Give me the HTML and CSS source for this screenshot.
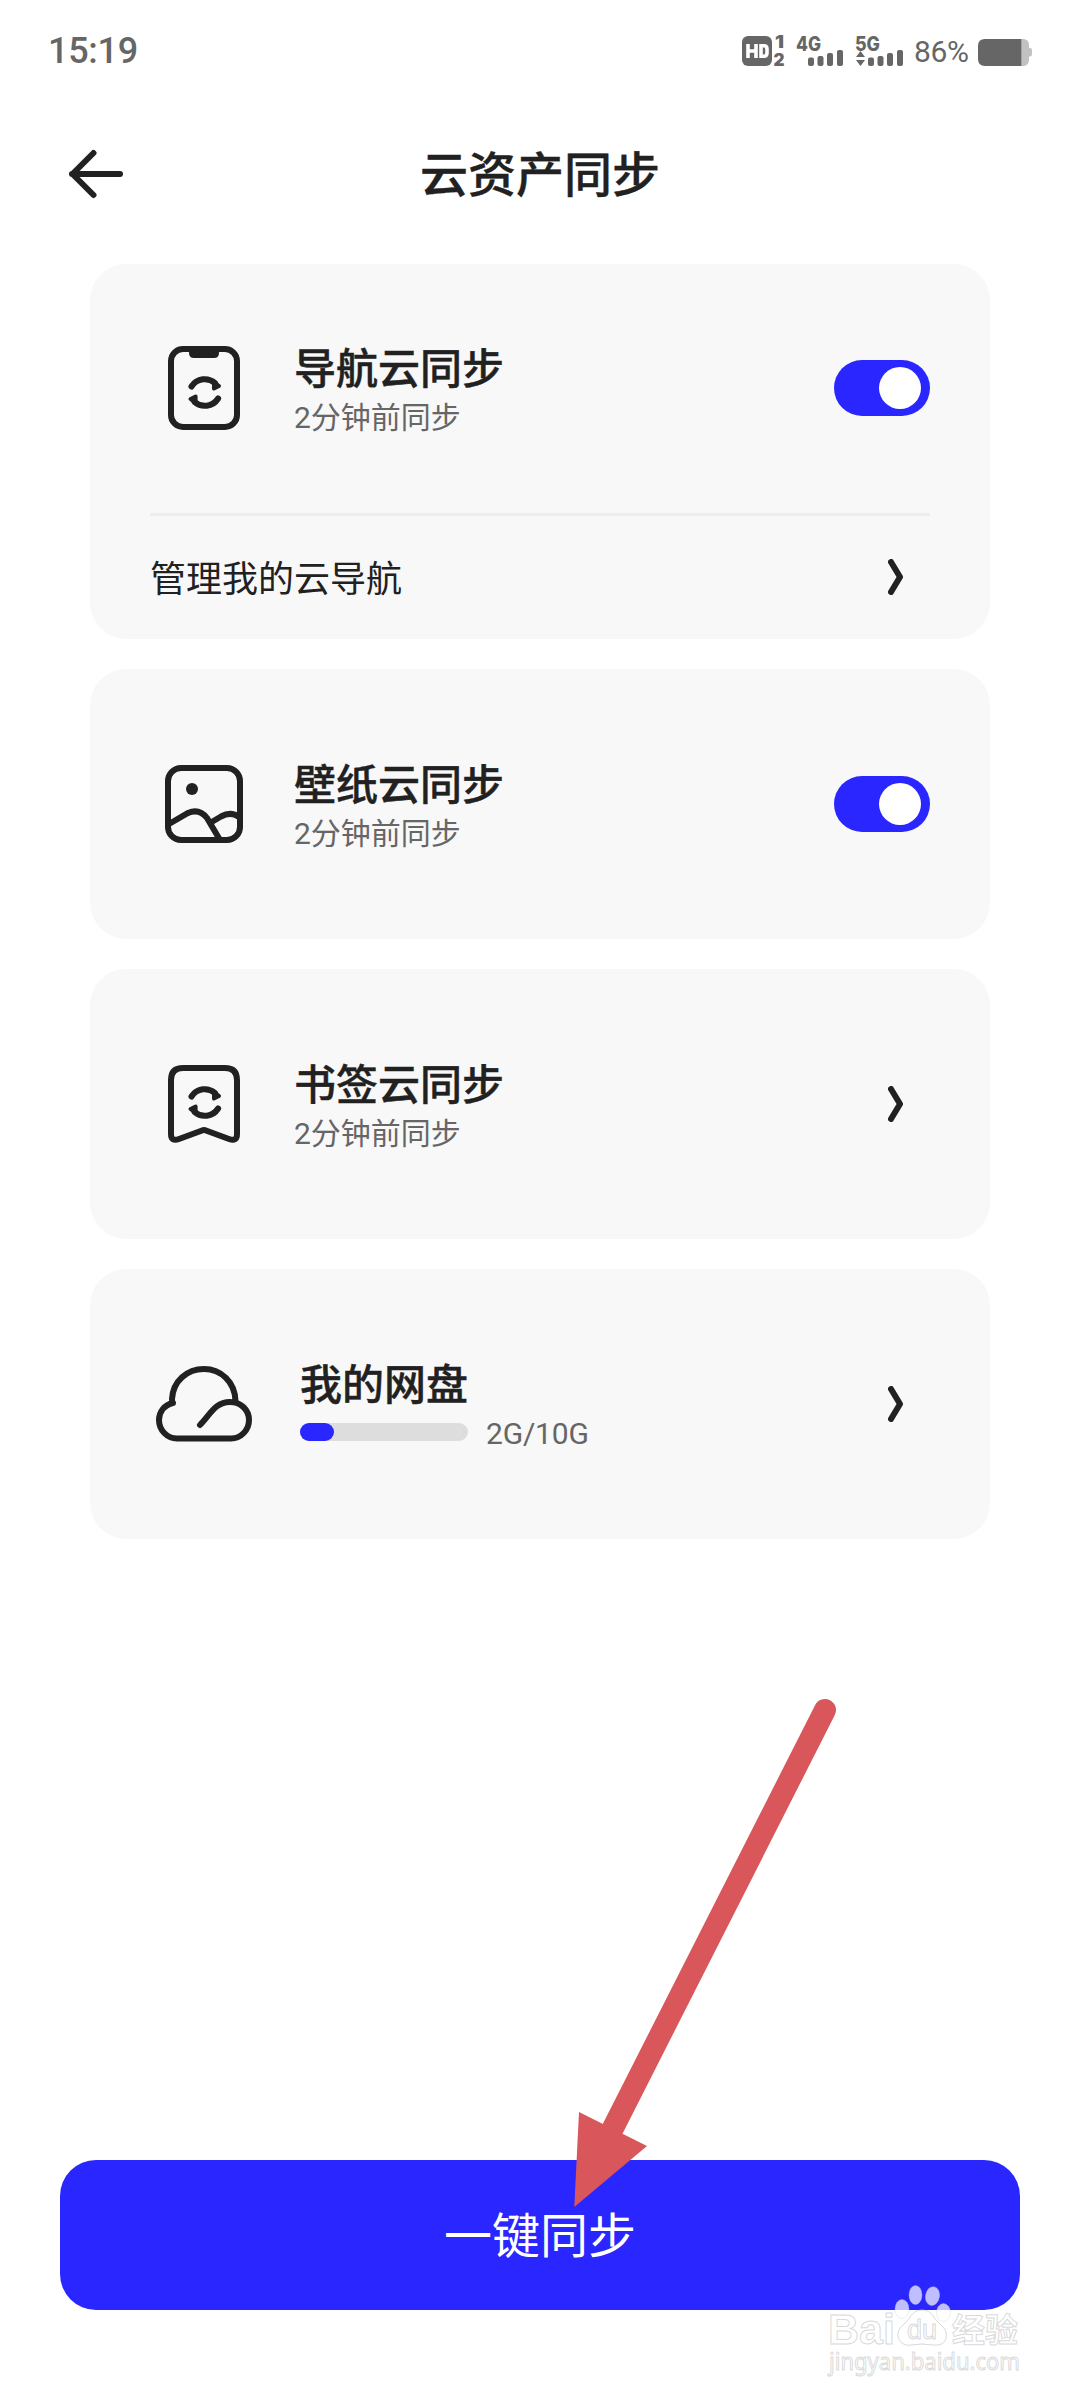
FILE: index.html
```html
<!DOCTYPE html>
<html lang="zh-CN">
<head>
<meta charset="utf-8">
<title>云资产同步</title>
<link rel="stylesheet" href="styles.css">
</head>
<body>
<svg class="defs" width="0" height="0">
  <symbol id="chevron" viewBox="0 0 15 36"><path d="M3 3L12 18L3 33" fill="none" stroke="#212121" stroke-width="6" stroke-linecap="round" stroke-linejoin="round"/></symbol>
  <symbol id="sync" viewBox="0 0 34 34">
    <g id="half"><path d="M3.500 10.500C9 2 20 1 27 7" fill="none" stroke="#212121" stroke-width="6" stroke-linecap="round"/><path d="M26 6L31 10L26 12.500Z" fill="#212121" stroke="#212121" stroke-width="4" stroke-linejoin="round"/></g>
    <use href="#half" transform="rotate(180 16.800 16.500)"/>
  </symbol>
</svg>
<div class="screen">
  <header class="status">
    <span class="time">15:19</span>
    <div class="indicators">
      <svg class="network" width="164" height="36" viewBox="740 34 164 36">
        <rect x="742" y="36" width="30" height="30" rx="6" fill="#666"/>
        <path d="M748 44V58M756 44V58M748 51H756" fill="none" stroke="#fff" stroke-width="3.600"/>
        <path d="M761 45.800H764Q767 45.800 767 49V53Q767 56.200 764 56.200H761Z" fill="none" stroke="#fff" stroke-width="3.600"/>
        <g class="tiny"><text x="775" y="48" textLength="9" lengthAdjust="spacingAndGlyphs">1</text><text x="773.500" y="65.500" textLength="11" lengthAdjust="spacingAndGlyphs">2</text></g>
        <g class="gen"><text x="796" y="51" textLength="25" lengthAdjust="spacingAndGlyphs">4G</text><text x="855" y="51" textLength="25" lengthAdjust="spacingAndGlyphs">5G</text></g>
        <g fill="#666">
          <rect x="808" y="57.500" width="6" height="8.500" rx="2"/><rect x="817.500" y="56" width="6" height="10" rx="2"/><rect x="827" y="53" width="6" height="13" rx="2"/><rect x="837" y="50" width="6" height="16" rx="2"/>
          <rect x="868" y="57.500" width="6" height="8.500" rx="2"/><rect x="877.500" y="56" width="6" height="10" rx="2"/><rect x="887" y="53" width="6" height="13" rx="2"/><rect x="897" y="50" width="6" height="16" rx="2"/>
          <path d="M856 57L860.500 51L865 57ZM856 60L860.500 66L865 60Z"/>
        </g>
      </svg>
      <span class="percent">86%</span>
      <svg class="battery" width="54" height="27" viewBox="0 0 54 27">
        <path d="M43.500 0H46Q51 1 51 6V9H52Q54 9 54 11V15Q54 17.500 52 17.500H51V21Q51 26 46 27H43.500Z" fill="#c2c2c2"/>
        <path d="M43.500 0H7Q0 0 0 7V20Q0 27 7 27H43.500Z" fill="#666"/>
      </svg>
    </div>
  </header>

  <nav class="titlebar">
    <svg class="back" width="56" height="50" viewBox="0 0 56 50"><path d="M52 25H4M25.500 4L4.500 25L25.500 46" fill="none" stroke="#212121" stroke-width="6" stroke-linecap="round" stroke-linejoin="round"/></svg>
    <h1 class="title">云资产同步</h1>
  </nav>

  <main class="cards">
    <section class="card">
      <div class="row first">
        <svg class="icon" width="108" height="108" viewBox="0 0 108 108">
          <rect x="21" y="15" width="66" height="78" rx="12" fill="none" stroke="#212121" stroke-width="6"/>
          <path d="M39 14H69V19Q69 24 64 24H44Q39 24 39 19Z" fill="#212121"/>
          <use href="#sync" x="38" y="42" width="34" height="34"/>
        </svg>
        <div class="label"><h2 class="name">导航云同步</h2><p class="note">2分钟前同步</p></div>
        <span class="switch"></span>
      </div>
      <div class="manage"><span>管理我的云导航</span><svg class="chevron" width="15" height="36"><use href="#chevron"/></svg></div>
    </section>

    <section class="card">
      <div class="row">
        <svg class="icon" width="108" height="108" viewBox="0 0 108 108">
          <g fill="none" stroke="#212121" stroke-width="6"><rect x="18" y="18" width="72" height="72" rx="13"/>
          <path d="M19 74L38 63Q49 58 57 68L70 90M60 73L71 66.500Q81 61 89 67"/></g>
          <circle cx="42" cy="39" r="6" fill="#212121"/>
        </svg>
        <div class="label"><h2 class="name">壁纸云同步</h2><p class="note">2分钟前同步</p></div>
        <span class="switch"></span>
      </div>
    </section>

    <section class="card">
      <div class="row">
        <svg class="icon" width="108" height="108" viewBox="0 0 108 108">
          <path d="M33 18H75Q87 18 87 30V84Q87 92 79 89L56 80.500Q54 79.500 52 80.500L29 89Q21 92 21 84V30Q21 18 33 18Z" fill="none" stroke="#212121" stroke-width="6"/>
          <use href="#sync" x="38" y="36" width="34" height="34"/>
        </svg>
        <div class="label"><h2 class="name">书签云同步</h2><p class="note">2分钟前同步</p></div>
        <svg class="chevron" width="15" height="36"><use href="#chevron"/></svg>
      </div>
    </section>

    <section class="card">
      <div class="row">
        <svg class="icon" width="108" height="108" viewBox="0 0 108 108">
          <path d="M23 53C14 55 9 62 9 70C9 80 17 88.500 27 88.500H81C91 88.500 99 80 99 70C99 60 91 52 80 52C65 52 60 65 50 75M23 53Q22 53 22 49C23 31 37 19 54 19C71 19 85 32 85.500 51" fill="none" stroke="#212121" stroke-width="6" stroke-linecap="round" stroke-linejoin="round"/>
        </svg>
        <div class="label drive"><h2 class="name">我的网盘</h2>
          <div class="usage"><div class="bar"><div class="fill" style="width:20%"></div></div><span class="amount">2G/10G</span></div>
        </div>
        <svg class="chevron" width="15" height="36"><use href="#chevron"/></svg>
      </div>
    </section>
  </main>

  <button class="sync-all">一键同步</button>

  <svg class="pointer" width="280" height="520" viewBox="570 1690 280 520">
    <path d="M825 1710L608 2138" stroke="#d9565b" stroke-width="22" stroke-linecap="round"/>
    <path d="M579 2112L647 2146L574.300 2207Z" fill="#d9565b"/>
  </svg>
  <svg class="watermark" width="210" height="100" viewBox="820 2280 210 100">
    <g fill="#fff" fill-opacity=".7" stroke="#c8c8c8" stroke-opacity=".7">
      <g stroke-opacity=".3"><ellipse cx="902" cy="2309" rx="7" ry="9.500"/><ellipse cx="915.500" cy="2295" rx="6.500" ry="9.500"/><ellipse cx="932.500" cy="2296" rx="7" ry="9.500" transform="rotate(10 932 2296)"/><ellipse cx="943.500" cy="2312.500" rx="7" ry="9"/></g>
      <path d="M922 2310C911 2310 911 2319 903 2325C893 2333 899 2347 911 2345Q922 2343 933 2345C948 2347 950 2332 941 2325C933 2319 933 2310 922 2310Z"/>
      <text class="wm-brand" x="828" y="2344" textLength="67" lengthAdjust="spacingAndGlyphs">Bai</text>
      <text class="wm-du" x="907" y="2339" textLength="30" lengthAdjust="spacingAndGlyphs">du</text>
      <text class="wm-cjk" x="952" y="2342" textLength="66" lengthAdjust="spacingAndGlyphs">经验</text>
      <text class="wm-url" x="829" y="2370" textLength="191" lengthAdjust="spacingAndGlyphs">jingyan.baidu.com</text>
    </g>
  </svg>
</div>
</body>
</html>
```
FILE: styles.css
```css
* { box-sizing: border-box; }
body { margin: 0; background: #fff; color: #212121; font-family: Roboto, "Noto Sans CJK SC", sans-serif; }
h1, h2, p { margin: 0; }
svg { display: block; flex: none; }
.defs { position: absolute; }
.screen { position: relative; width: 1080px; height: 2400px; display: flex; flex-direction: column; overflow: hidden; }

.status { height: 104px; padding: 0 48px; display: flex; justify-content: space-between; align-items: center; color: #666; }
.time { font-size: 36px; font-weight: 500; line-height: 42px; letter-spacing: -.3px; padding-bottom: 2px; }
.indicators { display: flex; align-items: center; }
.network, .watermark { overflow: visible; }
.percent { width: 58px; margin: 0 6px 0 10px; padding-bottom: 1px; font-size: 30px; line-height: 36px; font-weight: 400; letter-spacing: -.4px; white-space: nowrap; }
.tiny { font: 900 17px Inter, sans-serif; fill: #666; }
.gen { font: 800 20px Inter, sans-serif; fill: #666; }

.titlebar { height: 140px; padding: 0 68px; display: grid; grid-template-columns: 56px 1fr 56px; align-items: center; }
.title { padding-top: 3px; font-size: 48px; font-weight: 500; line-height: 70px; text-align: center; -webkit-text-stroke: .4px #212121; }

.cards { padding: 20px 90px 0; display: flex; flex-direction: column; gap: 30px; }
.card { background: #f8f8f8; border-radius: 36px; padding: 0 60px; }
.row { height: 270px; display: flex; align-items: center; }
.row.first { height: 249px; padding-bottom: 1px; }
.label { flex: 1; margin-left: 36px; padding-top: 9px; }
.name { font-size: 42px; font-weight: 500; line-height: 50px; -webkit-text-stroke: .4px #212121; }
.note { font-size: 30px; line-height: 45px; font-weight: 400; color: #666; }
.switch { width: 96px; height: 56px; border-radius: 28px; background: #2926ff; padding: 7px 9px; display: flex; justify-content: flex-end; }
.switch::after { content: ""; width: 42px; height: 42px; border-radius: 50%; background: #fff; }
.chevron { margin-right: 27px; }
.manage { height: 126px; border-top: 3px solid #ededed; padding-bottom: 1px; display: flex; align-items: center; justify-content: space-between; font-size: 36px; line-height: 54px; }
.manage span { padding-top: 5px; }
.drive { margin-left: 42px; }
.usage { height: 45px; padding-bottom: 3px; display: flex; align-items: center; gap: 18px; }
.bar { width: 168px; height: 18px; border-radius: 9px; background: #ddd; }
.fill { height: 18px; border-radius: 9px; background: #2926ff; }
.amount { padding-top: 3px; font-size: 30px; line-height: 36px; color: #666; font-weight: 400; letter-spacing: -.2px; }

.sync-all { margin: auto 60px 90px; padding: 3px 0 0; height: 150px; border: 0; border-radius: 36px; background: #2926ff; color: #fff; font: 400 48px/70px Roboto, "Noto Sans CJK SC", sans-serif; }

.pointer { position: absolute; left: 570px; top: 1690px; }
.watermark { position: absolute; left: 820px; top: 2280px; }
.wm-brand { font: 700 43px "Liberation Sans", sans-serif; }
.wm-du { font: 400 27px "Liberation Sans", sans-serif; }
.wm-cjk { font: 700 33px "Noto Sans CJK SC", sans-serif; }
.wm-url { font: 400 24px "Noto Sans", sans-serif; }
```
